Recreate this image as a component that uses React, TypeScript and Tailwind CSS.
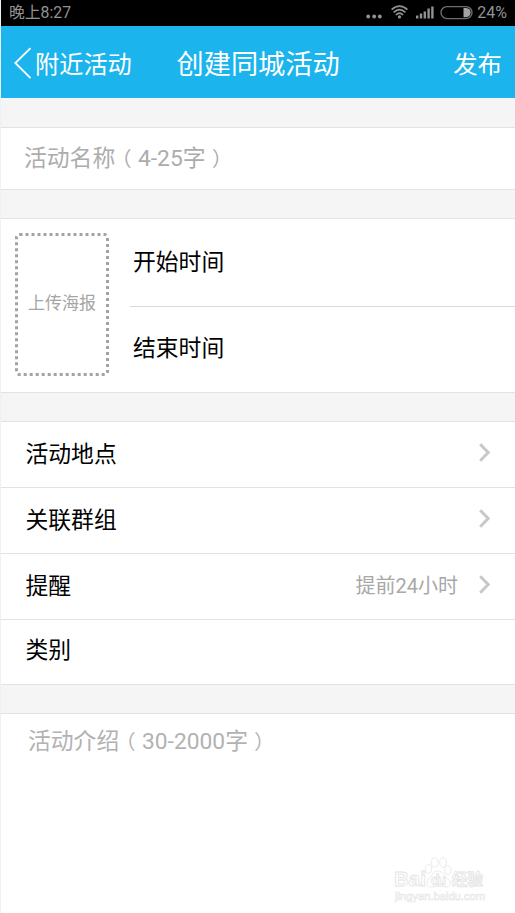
type Row = {
  label: string;
  value?: string;
  arrow?: boolean;
  size: string;
};

const ROWS: Row[] = [
  { label: "活动地点", arrow: true, size: "h-[66px]" },
  { label: "关联群组", arrow: true, size: "h-[66px]" },
  { label: "提醒", value: "提前24小时", arrow: true, size: "h-[66px]" },
  { label: "类别", size: "h-[65px] pb-[3px]" },
];

const SIGNAL = [3, 5, 7, 10, 12];

const Gap = () => <div className="h-[29px] shrink-0 border-b border-[#e2e2e2] bg-[#f5f5f5]" />;

// Half-width brackets with even margins, so they sit centred in a full cell
const Hint = ({ title, range }: { title: string; range: string }) => (
  <p>
    {title}
    <span className="mx-[6.4px] text-[20px] [font-feature-settings:'halt']">（</span>
    {range}
    <span className="mx-[6.4px] text-[20px] [font-feature-settings:'halt']">）</span>
  </p>
);

const StatusBar = () => (
  <div className="flex h-[26px] shrink-0 items-center bg-black pr-[8px] pl-[8px] text-[#929292]">
    <span className="text-[15.8px] leading-[24px]">晚上8:27</span>
    <div className="ml-auto flex items-center">
      <svg width="16" height="24" viewBox="0 0 16 24" fill="currentColor">
        <circle cx="2.2" cy="15.5" r="1.9" />
        <circle cx="8.2" cy="15.5" r="1.9" />
        <circle cx="13.8" cy="15.5" r="1.9" />
      </svg>
      <svg className="ml-[9px]" width="17" height="24" viewBox="0 0 17 24" fill="none" stroke="currentColor" strokeWidth="1.7">
        <path d="M0.6 8.6 Q8.5 1.6 16.4 8.6" />
        <path d="M2.6 11.4 Q8.5 5.8 14.4 11.4" />
        <path d="M4.9 14 Q8.5 10.4 12.1 14" />
        <circle cx="8.5" cy="15.9" r="1.6" fill="currentColor" stroke="none" />
      </svg>
      <svg className="ml-[7px]" width="19" height="24" viewBox="0 0 19 24" fill="currentColor">
        {SIGNAL.map((h, i) => (
          <rect key={h} x={1 + i * 3.8} y={17.5 - h} width="2.4" height={h} />
        ))}
      </svg>
      <svg className="ml-[6px]" width="34" height="24" viewBox="0 0 34 24">
        <rect x="1" y="5.6" width="31" height="12" rx="6" fill="none" stroke="#6d6d6d" strokeWidth="1.4" />
        <path d="M23.5 7 H26 Q30.6 7.4 30.6 11.6 Q30.6 15.8 26 16.2 H23.5 Z" fill="#a2a2a2" />
      </svg>
      <span className="ml-[3px] text-[16px] leading-[24px]">24%</span>
    </div>
  </div>
);

const Header = () => (
  <header className="grid h-[72px] shrink-0 grid-cols-[175.5px_1fr_auto] items-center bg-[#1bb4ed] pt-[5px] pr-[13px] text-white">
    <button className="flex items-center pl-[12px] text-left text-[24.2px] leading-[36px]">
      <svg className="mr-[4px] shrink-0 -translate-y-[2px]" width="18" height="32" viewBox="0 0 18 32" fill="none" stroke="white" strokeWidth="1.8">
        <path d="M17.5 1.2 L2.3 16 L17.5 31" />
      </svg>
      附近活动
    </button>
    <h1 className="text-[27.2px] leading-[40px]">创建同城活动</h1>
    <button className="text-[24.4px] leading-[36px]">发布</button>
  </header>
);

const Watermark = () => (
  <svg
    className="absolute right-[28px] bottom-[9px]"
    width="96"
    height="50"
    viewBox="0 0 96 50"
    fill="white"
    stroke="#e4e4e4"
    strokeWidth="0.8"
  >
    <text x="3" y="32" fontSize="20" fontWeight="700" textLength="32" lengthAdjust="spacingAndGlyphs" className="[font-family:'Liberation_Sans',sans-serif]">Bai</text>
    <ellipse cx="37.5" cy="15" rx="3.2" ry="4.4" />
    <ellipse cx="43.5" cy="8.5" rx="3.4" ry="4.8" />
    <ellipse cx="52" cy="8.5" rx="3.4" ry="4.8" />
    <ellipse cx="57" cy="16" rx="3.2" ry="4.4" />
    <path d="M47 17 C42 17 41 22 38 25 C34 29 36 34 41 33 C46 32 50 32 54 33 C60 34 61 28 57 25 C53 22 52 17 47 17 Z" />
    <text x="40" y="31" fontSize="14" fontWeight="700" textLength="15" className="[font-family:'Liberation_Sans',sans-serif]">du</text>
    <text x="61" y="31" fontSize="15.5" fontWeight="700" textLength="31" className="[font-family:'Noto_Sans_CJK_SC',sans-serif]">经验</text>
    <text x="4" y="46" fontSize="10" textLength="90" lengthAdjust="spacingAndGlyphs" strokeWidth="0.5" className="[font-family:'Liberation_Sans',sans-serif]">jingyan.baidu.com</text>
  </svg>
);

const App = () => (
  <div className="relative flex h-[913px] w-[515px] flex-col overflow-hidden border-l border-[#eaf1fd] bg-white font-[Roboto,'Noto_Sans_CJK_SC',sans-serif] text-[22.8px] leading-[34px] text-black" lang="zh-CN">
    <StatusBar />
    <Header />
    <div className="h-[30px] shrink-0 border-b border-[#e2e2e2] bg-[#f5f5f5]" />

    <div className="flex h-[62px] shrink-0 items-center border-b border-[#e2e2e2] pt-px pl-[23px] text-[#acacac]">
      <Hint title="活动名称" range="4-25字" />
    </div>
    <Gap />

    <section className="flex h-[174px] shrink-0 border-b border-[#e2e2e2]">
      <div className="relative mt-[14px] ml-[14px] flex h-[143px] w-[94px] items-center justify-center pb-[4px] text-[17px] leading-[26px] text-[#a5a5a5]">
        <svg className="absolute inset-0" width="94" height="143" viewBox="0 0 94 143" fill="none" stroke="#a3a3a3" strokeWidth="3" strokeDasharray="3 3">
          <rect x="1.5" y="1.5" width="91" height="140" rx="3" />
        </svg>
        <span>上传海报</span>
      </div>
      <div className="ml-[21px] flex flex-1 flex-col">
        <div className="flex h-[88px] items-center border-b border-[#dadada] pl-[3px]">开始时间</div>
        <div className="flex flex-1 items-center pb-[2px] pl-[3px]">结束时间</div>
      </div>
    </section>
    <Gap />

    {ROWS.map(row => (
      <div key={row.label} className={`flex shrink-0 items-center border-b border-[#e2e2e2] pr-[24px] pl-[24.5px] ${row.size}`}>
        <span>{row.label}</span>
        {row.value && <span className="mb-[2px] ml-auto text-[20px] text-[#a8a8a8]">{row.value}</span>}
        {row.arrow && (
          <svg className={`-translate-y-[2px] ${row.value ? "ml-[21px]" : "ml-auto"}`} width="12" height="20" viewBox="0 0 12 20" fill="none" stroke="#c8c8c8" strokeWidth="3">
            <path d="M1.2 1.2 L9.2 9.5 L1.2 17.8" />
          </svg>
        )}
      </div>
    ))}
    <Gap />

    <div className="pt-[11px] pl-[27px] text-[#b2b2b2]">
      <Hint title="活动介绍" range="30-2000字" />
    </div>

    <Watermark />
  </div>
);

export default App;
